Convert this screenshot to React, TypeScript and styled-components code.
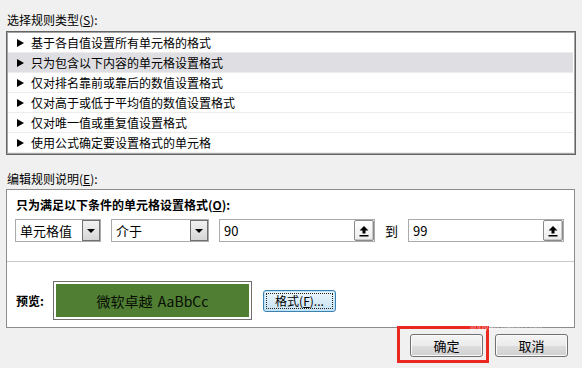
import React from "react";
import styled, { createGlobalStyle } from "styled-components";

const Global = createGlobalStyle`
  html, body { margin: 0; padding: 0; background: #f0f0f0; }
  #root { width: 582px; height: 368px; }
`;

const Page = styled.div`
  position: relative;
  width: 582px;
  height: 368px;
  box-sizing: border-box;
  background: #f0f0f0;
  font-family: "Noto Sans CJK SC", "Microsoft YaHei", sans-serif;
  font-size: 12px;
  color: #000;
  padding-top: 12px;
  overflow: hidden;
`;

const SectionLabel = styled.div<{ $top?: number }>`
  height: 16px;
  line-height: 16px;
  padding-left: 7px;
  margin-top: ${(p) => p.$top ?? 0}px;
`;

const U = styled.span`
  text-decoration: underline;
  text-underline-offset: 1px;
`;

const RuleList = styled.div`
  margin: 3px 6px 0 6px;
  border: 1px solid #646464;
  box-shadow: inset 0 0 0 1px #a4a4a4;
  background: #fff;
  padding: 1px 2px 1px 1px;
`;

const RuleRow = styled.div<{ $selected?: boolean }>`
  height: 19px;
  border-bottom: 1px solid #ececec;
  background: ${(p) => (p.$selected ? "#dfdfe3" : "#fff")};
  display: flex;
  align-items: center;
  padding-left: 8px;
  line-height: 19px;
`;

const Tri = styled.span`
  width: 0;
  height: 0;
  border-top: 4.5px solid transparent;
  border-bottom: 4.5px solid transparent;
  border-left: 7px solid #000;
  margin-right: 7px;
  margin-left: 1px;
`;

const Panel = styled.div`
  margin: 2px 7px 0 6px;
  border: 1px solid #8c8c8c;
  background: #fff;
`;

const TopSection = styled.div`
  padding: 7px 8px 19px 8px;
  border-bottom: 1px solid #c8c8c8;
`;

const Heading = styled.div`
  font-weight: bold;
  height: 16px;
  line-height: 16px;
  padding-left: 1px;
`;

const ControlRow = styled.div`
  display: flex;
  align-items: center;
  margin-top: 6px;
  height: 23px;
`;

const Field = styled.div<{ $w: number; $gap?: number }>`
  width: ${(p) => p.$w}px;
  height: 23px;
  box-sizing: border-box;
  border: 1px solid #ababab;
  background: #fff;
  display: flex;
  align-items: center;
  justify-content: space-between;
  margin-right: ${(p) => p.$gap ?? 0}px;
  font-size: 13px;
  padding-left: 4px;
  padding-right: 0px;
`;

const FieldText = styled.span`
  line-height: 21px;
`;

const DropBtn = styled.div`
  width: 18px;
  height: 21px;
  box-sizing: border-box;
  border: 1px solid #707070;
  background: linear-gradient(#f2f2f2, #d6d6d6);
  display: flex;
  align-items: center;
  justify-content: center;
`;

const DownTri = styled.span`
  width: 0;
  height: 0;
  border-left: 4px solid transparent;
  border-right: 4px solid transparent;
  border-top: 4px solid #000;
`;

const UpBtn = styled.div`
  width: 20px;
  height: 21px;
  box-sizing: border-box;
  border: 1px solid #8a8a8a;
  border-radius: 2px;
  background: linear-gradient(#ffffff, #ececec);
  box-shadow: inset -1px -1px 0 #c8c8c8;
  display: flex;
  align-items: center;
  justify-content: center;
`;

const To = styled.span`
  font-size: 13px;
  width: 33px;
  text-align: center;
`;

const BottomSection = styled.div`
  height: 65px;
  box-sizing: border-box;
  padding: 19px 0 0 9px;
  display: flex;
  align-items: flex-start;
`;

const PreviewLabel = styled.div`
  font-weight: bold;
  width: 37px;
  height: 39px;
  line-height: 39px;
`;

const PreviewBox = styled.div`
  width: 199px;
  height: 39px;
  box-sizing: border-box;
  border: 1px solid #6f6f6f;
  padding: 2px;
  background: #fff;
`;

const PreviewFill = styled.div`
  height: 100%;
  background: #507f33;
  color: #060c03;
  display: flex;
  align-items: center;
  justify-content: center;
  font-size: 14px;
  font-weight: 400;
  word-spacing: 2px;
`;

const FormatBtn = styled.div`
  margin-left: 11px;
  margin-top: 9px;
  width: 73px;
  height: 22px;
  box-sizing: border-box;
  border: 1px solid #3c7fb1;
  border-radius: 3px;
  background: linear-gradient(#eef7fc, #d9ecf7 50%, #c8e2f2);
  box-shadow: inset 0 0 0 1px #bfe4f7;
  padding: 2px;
`;

const FocusRect = styled.div`
  height: 100%;
  box-sizing: border-box;
  border: 1px dotted #222;
  display: flex;
  align-items: center;
  justify-content: center;
  line-height: 14px;
`;

const Footer = styled.div`
  display: flex;
  justify-content: flex-end;
  gap: 12px;
  margin-top: 6px;
  padding-right: 14px;
`;

const DlgBtn = styled.div`
  position: relative;
  width: 73px;
  height: 23px;
  box-sizing: border-box;
  border: 1px solid #707070;
  border-radius: 3px;
  background: linear-gradient(#f4f4f4, #ebebeb 50%, #dddddd 51%, #d0d0d0);
  box-shadow: inset 0 0 0 1px #fbfbfb;
  display: flex;
  align-items: center;
  justify-content: center;
  font-size: 13px;
`;

const Highlight = styled.div`
  position: absolute;
  left: -14px;
  top: -9px;
  width: 92px;
  height: 37px;
  box-sizing: border-box;
  border: 3px solid #ea2820;
  pointer-events: none;
`;

const Watermark = styled.div`
  position: absolute;
  left: 470px;
  top: 322px;
  color: rgba(255, 255, 255, 0.55);
  font-family: "Liberation Sans", sans-serif;
  font-size: 9px;
  pointer-events: none;
`;

const UpArrow = () => (
  <svg width="10" height="12" viewBox="0 0 10 12">
    <path d="M5 1 L9.5 5.5 L6.5 5.5 L6.5 8.5 L3.5 8.5 L3.5 5.5 L0.5 5.5 Z" fill="#000" />
    <rect x="0.5" y="10" width="9" height="1.5" fill="#000" />
  </svg>
);

const rules = [
  "基于各自值设置所有单元格的格式",
  "只为包含以下内容的单元格设置格式",
  "仅对排名靠前或靠后的数值设置格式",
  "仅对高于或低于平均值的数值设置格式",
  "仅对唯一值或重复值设置格式",
  "使用公式确定要设置格式的单元格",
];

export default function App() {
  return (
    <Page>
      <Global />
      <SectionLabel>
        选择规则类型(<U>S</U>):
      </SectionLabel>
      <RuleList>
        {rules.map((r, i) => (
          <RuleRow key={r} $selected={i === 1}>
            <Tri />
            {r}
          </RuleRow>
        ))}
      </RuleList>
      <SectionLabel $top={16}>
        编辑规则说明(<U>E</U>):
      </SectionLabel>
      <Panel>
        <TopSection>
          <Heading>
            只为满足以下条件的单元格设置格式(<U>O</U>):
          </Heading>
          <ControlRow>
            <Field $w={86} $gap={10}>
              <FieldText>单元格值</FieldText>
              <DropBtn>
                <DownTri />
              </DropBtn>
            </Field>
            <Field $w={98} $gap={10}>
              <FieldText>介于</FieldText>
              <DropBtn>
                <DownTri />
              </DropBtn>
            </Field>
            <Field $w={156}>
              <FieldText>90</FieldText>
              <UpBtn>
                <UpArrow />
              </UpBtn>
            </Field>
            <To>到</To>
            <Field $w={156}>
              <FieldText>99</FieldText>
              <UpBtn>
                <UpArrow />
              </UpBtn>
            </Field>
          </ControlRow>
        </TopSection>
        <BottomSection>
          <PreviewLabel>预览:</PreviewLabel>
          <PreviewBox>
            <PreviewFill>微软卓越 AaBbCc</PreviewFill>
          </PreviewBox>
          <FormatBtn>
            <FocusRect>
              格式(<U>F</U>)...
            </FocusRect>
          </FormatBtn>
        </BottomSection>
      </Panel>
      <Footer>
        <DlgBtn>
          确定
          <Highlight />
        </DlgBtn>
        <DlgBtn>取消</DlgBtn>
      </Footer>
      <Watermark>jingyan.baidu.com</Watermark>
    </Page>
  );
}
